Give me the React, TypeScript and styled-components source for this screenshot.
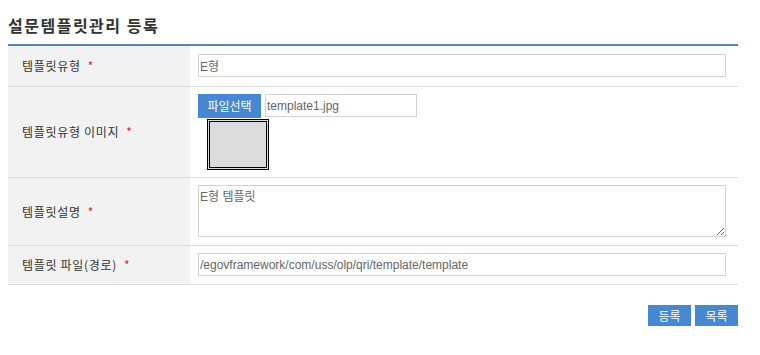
import styled, { createGlobalStyle } from "styled-components";

const GlobalStyle = createGlobalStyle`
  html, body {
    margin: 0;
    padding: 0;
    background: #fff;
    font-family: "Noto Sans CJK KR", "Liberation Sans", sans-serif;
    font-size: 12px;
    color: #333;
  }
`;

const rows = [
  { label: "템플릿유형", height: 41, kind: "text", value: "E형" },
  { label: "템플릿유형 이미지", height: 91, kind: "file", value: "template1.jpg" },
  { label: "템플릿설명", height: 68, kind: "area", value: "E형 템플릿" },
  {
    label: "템플릿 파일(경로)",
    height: 39,
    kind: "text",
    value: "/egovframework/com/uss/olp/qri/template/template",
  },
];

export default function App() {
  return (
    <>
      <GlobalStyle />
      <Page>
        <Title>설문템플릿관리 등록</Title>
        <Table>
          <tbody>
            {rows.map((r) => (
              <Row key={r.label} $height={r.height}>
                <Label>
                  {r.label}
                  <Required>*</Required>
                </Label>
                <Cell>
                  {r.kind === "text" && <TextInput readOnly value={r.value} />}
                  {r.kind === "area" && <TextArea readOnly value={r.value} />}
                  {r.kind === "file" && (
                    <>
                      <FileLine>
                        <FileButton>파일선택</FileButton>
                        <FileName readOnly value={r.value} />
                      </FileLine>
                      <Preview />
                    </>
                  )}
                </Cell>
              </Row>
            ))}
          </tbody>
        </Table>
        <Actions>
          <Button>등록</Button>
          <Button>목록</Button>
        </Actions>
      </Page>
    </>
  );
}

const Page = styled.div`
  width: 730px;
  padding: 15px 0 0 8px;
`;

const Title = styled.h2`
  margin: 0 0 9px 0;
  font-size: 16px;
  line-height: 20px;
  font-weight: bold;
  color: #333;
  letter-spacing: 1.5px;
`;

const Table = styled.table`
  width: 100%;
  border-collapse: collapse;
  border-top: 2px solid #4a87cd;
`;

const Row = styled.tr<{ $height: number }>`
  height: ${(p) => p.$height}px;
  border-bottom: 1px solid #dcdcdc;
`;

const Label = styled.th`
  width: 168px;
  padding: 0 0 0 14px;
  background: #f2f2f2;
  text-align: left;
  font-weight: normal;
  font-size: 12px;
  letter-spacing: 0.7px;
  color: #333;
`;

const Required = styled.span`
  margin-left: 7px;
  color: #e0221c;
`;

const Cell = styled.td`
  padding: 0 12px 0 8px;
  vertical-align: middle;
`;

const fieldBase = `
  box-sizing: border-box;
  border: 1px solid #d3d3d3;
  font-family: "Liberation Sans", "Noto Sans CJK KR", sans-serif;
  font-size: 12px;
  color: #666;
  outline: none;
  padding: 0 1px;
  margin: 0;
  background: #fff;
`;

const TextInput = styled.input`
  ${fieldBase}
  display: block;
  width: 100%;
  height: 23px;
`;

const TextArea = styled.textarea`
  ${fieldBase}
  display: block;
  width: 100%;
  height: 52px;
  padding: 1px;
  resize: both;
`;

const FileLine = styled.div`
  display: flex;
  align-items: center;
  gap: 4px;
`;

const FileButton = styled.span`
  display: inline-flex;
  align-items: center;
  justify-content: center;
  width: 63px;
  height: 24px;
  background: #4688d2;
  color: #fff;
  font-size: 12px;
`;

const FileName = styled.input`
  ${fieldBase}
  width: 152px;
  height: 23px;
`;

const Preview = styled.div`
  box-sizing: border-box;
  width: 62px;
  height: 51px;
  margin: 1px 0 0 9px;
  border: 3px double #000;
  background: #dcdcdc;
`;

const Actions = styled.div`
  display: flex;
  justify-content: flex-end;
  gap: 4px;
  margin-top: 20px;
`;

const Button = styled.button`
  width: 43px;
  height: 21px;
  padding: 0;
  border: 0;
  background: #4688d2;
  color: #fff;
  font-family: "Noto Sans CJK KR", sans-serif;
  font-size: 12px;
`;
